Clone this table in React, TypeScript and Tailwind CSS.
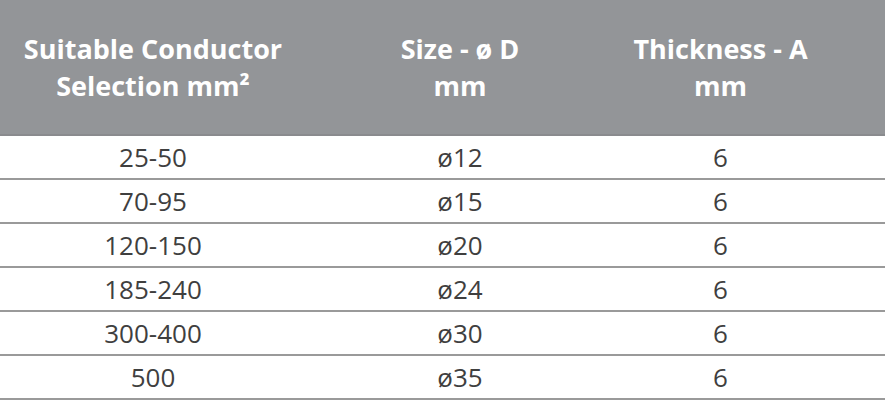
import React from 'react';

const ROWS = [
  ['25-50', 'ø12', '6'],
  ['70-95', 'ø15', '6'],
  ['120-150', 'ø20', '6'],
  ['185-240', 'ø24', '6'],
  ['300-400', 'ø30', '6'],
  ['500', 'ø35', '6'],
];

export default function App() {
  return (
    <div className="w-[885px] h-[400px] bg-white font-['Open_Sans',sans-serif]">
      {/* Header */}
      <div className="grid grid-cols-[306px_308px_1fr] h-[136px] bg-[#939598] border-b-2 border-[#8a8b8e] text-white font-bold text-[27px] leading-[37px] text-center">
        <div className="flex items-center justify-center">
          <div>
            Suitable Conductor
            <br />
            Selection mm²
          </div>
        </div>
        <div className="flex items-center justify-center">
          <div>
            Size - ø D
            <br />
            mm
          </div>
        </div>
        <div className="flex items-center justify-center pr-[58px]">
          <div>
            Thickness - A
            <br />
            mm
          </div>
        </div>
      </div>

      {/* Body */}
      {ROWS.map((row, i) => (
        <div
          key={i}
          className="grid grid-cols-[306px_308px_1fr] h-[44px] border-b-2 border-[#9a9a9a] text-[#3f3f3f] text-[26px] text-center"
        >
          <div className="flex items-center justify-center">{row[0]}</div>
          <div className="flex items-center justify-center">{row[1]}</div>
          <div className="flex items-center justify-center pr-[58px]">{row[2]}</div>
        </div>
      ))}
    </div>
  );
}
